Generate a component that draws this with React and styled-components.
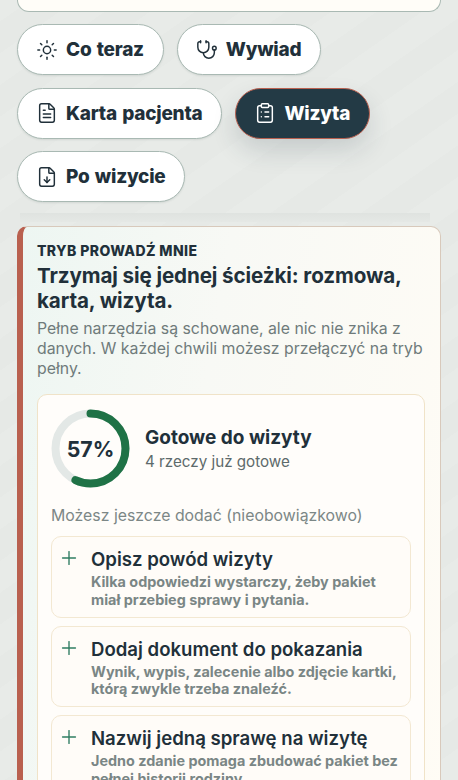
import React from 'react';
import styled, { createGlobalStyle } from 'styled-components';
import { Sun, Stethoscope, FileText, ClipboardList, FileDown, Plus } from 'lucide-react';

const GlobalStyle = createGlobalStyle`
html, body {
  margin: 0;
  padding: 0;
  height: 780px;
  overflow: hidden;
  background: #e8ebe8;
  font-family: Inter, "Noto Sans", sans-serif;
  color: #21303a;
}
* { box-sizing: border-box; }
`;

const Page = styled.div`
  height: 780px;
  overflow: hidden;
  padding: 0 17px;
  background: repeating-linear-gradient(-35deg, #e8ebe8 0 26px, #e6e9e6 26px 52px);
`;

const TopCard = styled.div`
  height: 12px;
  background: #fffdf8;
  border: 1px solid #a9b9b3;
  border-top: 0;
  border-radius: 0 0 14px 14px;
`;

const Tabs = styled.nav`
  display: flex;
  flex-wrap: wrap;
  gap: 12.5px 13px;
  margin-top: 12px;
`;

const Tab = styled.button`
  display: flex;
  align-items: center;
  gap: 8px;
  height: 51px;
  padding: 0 19px 0 18px;
  border-radius: 26px;
  font-family: inherit;
  font-size: 19px;
  font-weight: 800;
  letter-spacing: -0.25px;
  word-spacing: 1.5px;
  color: ${p => (p.$active ? '#ffffff' : '#21303a')};
  background: ${p => (p.$active ? '#233a45' : '#ffffff')};
  border: 1px solid ${p => (p.$active ? '#b9604f' : '#a9b9b3')};
  box-shadow: ${p => (p.$active ? '0 12px 24px rgba(35,58,69,0.16)' : '0 1px 2px rgba(60,80,75,0.12)')};
`;

const Band = styled.div`
  height: 9px;
  margin: 11px 11px 4px 3px;
  background: linear-gradient(#dfe3e0, #e5e8e5);
`;

const Panel = styled.section`
  height: 620px;
  padding: 15px 15px 0 14px;
  background: linear-gradient(100deg, #edf6f2 0%, #f8f9f5 40%, #fffcf5 100%);
  border: 1px solid #d8c9bb;
  border-left: 6px solid #b9604f;
  border-radius: 10px 10px 0 0;
`;

const Eyebrow = styled.div`
  font-size: 14px;
  line-height: 18px;
  font-weight: 800;
  letter-spacing: 0.4px;
  color: #21303a;
`;

const Heading = styled.h2`
  margin: 3px 0 0;
  font-size: 20.6px;
  line-height: 25px;
  font-weight: 700;
  letter-spacing: -0.1px;
  color: #21303a;
`;

const Lead = styled.p`
  margin: 6px 0 0;
  font-size: 15.85px;
  line-height: 20px;
  color: #6f7b7b;
`;

const Inner = styled.div`
  margin-top: 15px;
  padding: 14px 13px 0 13px;
  height: 500px;
  background: #fffdfa;
  border: 1px solid #f0e3c8;
  border-radius: 10px;
`;

const Summary = styled.div`
  display: flex;
  align-items: center;
  gap: 15px;
`;

const Ring = styled.div`
  position: relative;
  width: 79px;
  height: 79px;
  flex: none;
`;

const RingLabel = styled.span`
  position: absolute;
  inset: 0;
  display: flex;
  align-items: center;
  justify-content: center;
  font-size: 21.3px;
  font-weight: 700;
  color: #21303a;
`;

const SummaryTitle = styled.div`
  font-size: 19px;
  line-height: 24px;
  font-weight: 700;
  color: #21303a;
`;

const SummarySub = styled.div`
  margin-top: 2px;
  font-size: 15.2px;
  line-height: 20px;
  color: #5d6a6b;
`;

const Hint = styled.p`
  margin: 18px 0 0;
  font-size: 15.85px;
  line-height: 20px;
  color: #7c8786;
`;

const Items = styled.div`
  display: flex;
  flex-direction: column;
  gap: 8px;
  margin-top: 10px;
`;

const Item = styled.div`
  display: flex;
  gap: 11px;
  height: 81.5px;
  flex: none;
  padding: 10px 10px 0 6px;
  background: #fffcf8;
  border: 1px solid #f3e8d2;
  border-radius: 10px;
`;

const ItemIcon = styled.span`
  flex: none;
  display: flex;
  width: 22px;
  height: 22px;
  color: #2f7d62;
`;

const ItemTitle = styled.div`
  font-size: 18.6px;
  line-height: 24px;
  font-weight: 600;
  color: #21303a;
`;

const ItemText = styled.div`
  margin-top: 2px;
  font-size: 14.4px;
  line-height: 17.5px;
  font-weight: 700;
  color: #7a8685;
`;

const tabs = [
  { label: 'Co teraz', Icon: Sun },
  { label: 'Wywiad', Icon: Stethoscope },
  { label: 'Karta pacjenta', Icon: FileText },
  { label: 'Wizyta', Icon: ClipboardList, active: true },
  { label: 'Po wizycie', Icon: FileDown },
];

const items = [
  { title: 'Opisz powód wizyty', text: 'Kilka odpowiedzi wystarczy, żeby pakiet miał przebieg sprawy i pytania.' },
  { title: 'Dodaj dokument do pokazania', text: 'Wynik, wypis, zalecenie albo zdjęcie kartki, którą zwykle trzeba znaleźć.' },
  { title: 'Nazwij jedną sprawę na wizytę', text: 'Jedno zdanie pomaga zbudować pakiet bez pełnej historii rodziny.' },
];

function ProgressRing({ value }) {
  const r = 35;
  const c = 2 * Math.PI * r;
  return (
    <Ring>
      <svg width="79" height="79" viewBox="0 0 79 79">
        <circle cx="39.5" cy="39.5" r={r} fill="none" stroke="#e3e8e6" strokeWidth="8" />
        <circle
          cx="39.5"
          cy="39.5"
          r={r}
          fill="none"
          stroke="#1f7246"
          strokeWidth="8"
          strokeLinecap="round"
          strokeDasharray={`${(c * value) / 100} ${c}`}
          transform="rotate(-90 39.5 39.5)"
        />
      </svg>
      <RingLabel>{value}%</RingLabel>
    </Ring>
  );
}

export default function App() {
  return (
    <Page>
      <GlobalStyle />
      <TopCard />
      <Tabs>
        {tabs.map(({ label, Icon, active }) => (
          <Tab key={label} $active={active}>
            <Icon size={22} strokeWidth={1.6} />
            {label}
          </Tab>
        ))}
      </Tabs>
      <Band />
      <Panel>
        <Eyebrow>TRYB PROWADŹ MNIE</Eyebrow>
        <Heading>Trzymaj się jednej ścieżki: rozmowa, karta, wizyta.</Heading>
        <Lead>Pełne narzędzia są schowane, ale nic nie znika z danych. W każdej chwili możesz przełączyć na tryb pełny.</Lead>
        <Inner>
          <Summary>
            <ProgressRing value={57} />
            <div>
              <SummaryTitle>Gotowe do wizyty</SummaryTitle>
              <SummarySub>4 rzeczy już gotowe</SummarySub>
            </div>
          </Summary>
          <Hint>Możesz jeszcze dodać (nieobowiązkowo)</Hint>
          <Items>
            {items.map(item => (
              <Item key={item.title}>
                <ItemIcon><Plus size={22} strokeWidth={1.5} /></ItemIcon>
                <div>
                  <ItemTitle>{item.title}</ItemTitle>
                  <ItemText>{item.text}</ItemText>
                </div>
              </Item>
            ))}
          </Items>
        </Inner>
      </Panel>
    </Page>
  );
}
